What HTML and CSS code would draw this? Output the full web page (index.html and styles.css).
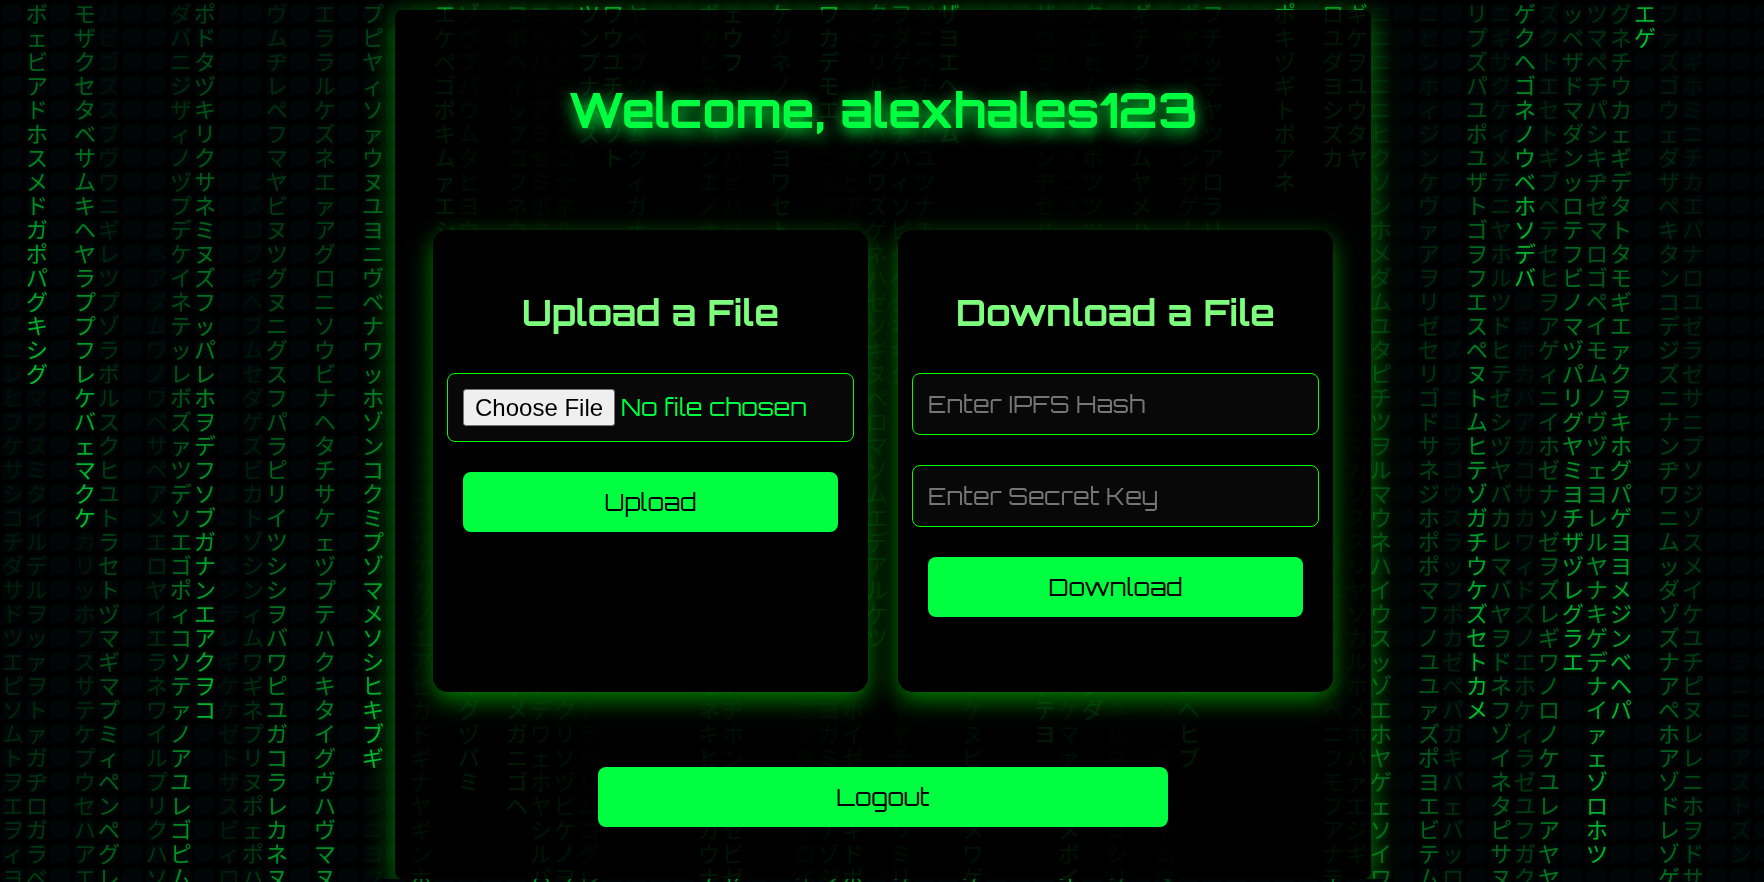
FILE: index.html
```html
<!DOCTYPE html>
<html lang="en">
<head>
<meta charset="utf-8">
<meta name="viewport" content="width=device-width, initial-scale=1">
<title>Dashboard</title>
<link rel="stylesheet" href="styles.css">
</head>
<body>
<svg class="tiles" aria-hidden="true">
  <defs>
    <pattern id="tile" width="24" height="24" patternUnits="userSpaceOnUse">
      <path d="M5 5l4-1 2 1 5-1 3-1 4 1-1 3 1 4-2 3 1 4-3 3-4 1-3 1-4-1-3 1-3-2 1-4-1-3 1-4z" fill="#000607"/>
    </pattern>
  </defs>
  <rect width="100%" height="100%" fill="url(#tile)"/>
</svg>
<div class="rain" id="rain" lang="ja" aria-hidden="true"></div>

<div class="page">
  <main class="panel">
    <h1 class="panel-title">Welcome, alexhales123</h1>
    <div class="cards">
      <form class="card">
        <h2 class="card-title">Upload a File</h2>
        <input class="field field-file" type="file" aria-label="File to upload">
        <button class="button" type="button">Upload</button>
      </form>
      <form class="card">
        <h2 class="card-title">Download a File</h2>
        <input class="field" type="text" placeholder="Enter IPFS Hash" aria-label="IPFS hash">
        <input class="field" type="text" placeholder="Enter Secret Key" aria-label="Secret key">
        <button class="button" type="button">Download</button>
      </form>
    </div>
    <button class="button logout" type="button">Logout</button>
  </main>
</div>
<script src="rain.js"></script>
</body>
</html>
```
FILE: styles.css
```css
:root {
  --green: #00ff41;
  --techno: Orbitron, "DejaVu Sans", Verdana, sans-serif;
}

* {
  box-sizing: border-box;
}

body {
  margin: 0;
  background: #000;
  color: var(--green);
  font-family: var(--techno);
  overflow: hidden;
}

.tiles {
  position: fixed;
  inset: 0;
  width: 100%;
  height: 100%;
}

.rain {
  position: fixed;
  inset: 0;
  overflow: hidden;
  display: grid;
  grid-auto-columns: 24px;
  grid-auto-rows: 24px;
  padding-left: 1px;
  font: 22px/24px "Noto Sans CJK JP", sans-serif;
  filter: drop-shadow(0 0 2px rgba(0, 255, 65, 0.2));
}

.stream {
  margin: 0;
  text-align: center;
  line-break: anywhere;
  color: transparent;
  background-image: linear-gradient(rgba(0, 215, 54, calc(var(--from) * 0.8)), rgba(0, 215, 54, calc(var(--to) * 0.9)));
  -webkit-background-clip: text;
  background-clip: text;
}

.page {
  position: relative;
  padding: 10px 16px 0 18px;
}

.panel {
  max-width: 976px;
  margin: 0 auto;
  padding: 70px 38px 52px;
  background: rgba(0, 0, 0, 0.85);
  border-radius: 8px;
  box-shadow: 0 6px 28px rgba(0, 255, 0, 0.5);
  text-align: center;
}

.panel-title {
  margin: 0 0 90px;
  font-size: 48px;
  line-height: 60px;
  text-shadow: 0 4px 16px var(--green);
}

.cards {
  display: grid;
  grid-template-columns: repeat(auto-fit, minmax(340px, 1fr));
  gap: 30px;
}

.card {
  display: flex;
  flex-direction: column;
  gap: 30px;
  padding: 60px 14px 75px;
  background: rgba(0, 0, 0, 0.9);
  border-radius: 15px;
  box-shadow: 0 8px 24px rgba(0, 255, 0, 0.5);
}

.card-title {
  margin: 0 0 8px;
  color: #7dff7d;
  font-size: 36px;
  line-height: 45px;
}

.field {
  width: 100%;
  padding: 14px 15px;
  border: 1px solid #00ff00;
  border-radius: 8px;
  background: #080808;
  color: var(--green);
  font: 24px/32px var(--techno);
  outline: none;
}

.field::placeholder {
  color: #757575;
}

.field-file {
  height: 69px;
  padding: 15px;
}

.field-file::file-selector-button {
  height: 37px;
  margin-right: 6px;
  padding: 0 11px;
  border: 1px solid #767676;
  border-radius: 3px;
  background: #efefef;
  color: #000;
  font: 24px/32px "Liberation Sans", Arial, sans-serif;
}

.button {
  height: 60px;
  margin: 0 16px;
  border: 0;
  border-radius: 8px;
  background: var(--green);
  color: #000;
  font: 24px/30px var(--techno);
  cursor: pointer;
}

.logout {
  width: calc(100% - 330px);
  margin: 75px 0 0;
}
```
FILE: rain.js
```js
// Each stream: column, first row, glyphs, brightness at the top, brightness at the bottom.
const streams = [
  [0, 12, "サズニレヒフケサシコチダサドツエピソムトヲエヲィヨ", 0.03, 0.22],
  [1, 0, "ボェビアドホスメドガポパグキシグ", 0.45, 1],
  [1, 16, "マワスミタイルデルヲッァヲトァガヂロガラベ", 0.05, 0.28],
  [3, 0, "モザクセタベサムキヘヤラププフレケバェマクケ", 0.4, 1],
  [3, 22, "カリッホプスサテケプウセハアエ", 0.07, 0.26],
  [4, 0, "バビゴズスブヴワニギレツプゾラボルスクヒユトラセトヅマギマプミィペンペグレ", 0.03, 0.5],
  [6, 8, "スニヘアダムワノワベサペアメエロヤイエラネワイルプリクハソ", 0.02, 0.26],
  [7, 0, "ダバニジザィノヅプデケイネテッレボズァツデソエゴポィコソテァノアユレゴピム", 0.14, 0.75],
  [8, 0, "ポドタヅキリクサネミヌズフッパレホヲデフソブガナンエアクヲコ", 0.33, 0.95],
  [9, 18, "イニスニシメンテレギケケゼトザスビィロ", 0.01, 0.12],
  [10, 7, "ズズロブギヘブムセダゲズビカトゾシンィムワギネプリヌポェポハ", 0.03, 0.26],
  [11, 0, "ヴムヂレペフマヤビヌツグヌニグスフパラピリイツシシヲバワピユガコラレカネヌ", 0.14, 0.75],
  [13, 0, "エララルケズネエァアグロニソウビナヘタチサケェヅプテハクキタイグヴハヴマヌ", 0.15, 0.75],
  [15, 0, "プピヤィソァウヌユヨニヴベナワッホゾンコクミプゾマメソシヒキブギ", 0.3, 0.95],
  [15, 32, "ニヌニヨク", 0.03, 0.06],
  [17, 16, "ワゴムセロウサケカソエアヒカドギナヤギンホ", 0.1, 0.6],
  [18, 0, "エケペゴポキムァエシ", 0.7, 1],
  [19, 0, "ゾヴブバウムタヒヨウ", 0.25, 0.5],
  [19, 27, "ノマグヅバミ", 0.7, 1],
  [21, 0, "コボヘィッブコフネウケヒナクツ", 0.3, 0.55],
  [21, 24, "セサコニケメガニゴヘ", 0.6, 1],
  [22, 0, "ニヘバトアミセミボネ", 0.15, 0.35],
  [22, 23, "ルアスゲツシデワェホヤシルバ", 0.4, 0.75],
  [23, 0, "コシベニスナコナネル", 0.1, 0.3],
  [23, 23, "ニソヅリヤソクリソヅピケノヲ", 0.3, 0.7],
  [24, 0, "ツンプナホス", 0.85, 1],
  [24, 28, "ルトテペリムコグレ", 0.15, 0.35],
  [25, 0, "ワウユチイソト", 0.85, 1],
  [26, 0, "ヤペブツカムクィガナブイソコ", 0.35, 0.6],
  [29, 0, "ボカレネキカンエノナ", 0.25, 0.4],
  [29, 26, "ソノオネキヒガンガウナ", 0.3, 0.8],
  [30, 0, "ェウフ", 0.85, 1],
  [30, 3, "トヒスハヒハソ", 0.15, 0.25],
  [30, 26, "ヤギドヂホンミナセビゼ", 0.3, 0.75],
  [32, 0, "ケジネノヘフヨワセトミモシサ", 0.5, 0.85],
  [33, 29, "エラタジロナロイ", 0.15, 0.3],
  [34, 0, "ワカデモエ", 0.9, 1],
  [34, 5, "ムニエギス", 0.1, 0.2],
  [34, 27, "ドムヨガミヌドナゾジ", 0.3, 0.6],
  [35, 0, "ハメバソルテゼピアス", 0.1, 0.25],
  [35, 27, "ラネホイゼエサキドポ", 0.3, 0.7],
  [36, 0, "クァリルソパクワズゲネハゼソギヌペロマソムエデアルケツ", 0.35, 0.9],
  [37, 0, "ヲダゲキミヂハィソピヘベダネギク", 0.4, 0.7],
  [37, 29, "ヤヤテスルリミリ", 0.2, 0.5],
  [38, 0, "ペニペチロエユツナエ", 0.25, 0.5],
  [39, 0, "ザヨエヘヘム", 0.8, 1],
  [40, 28, "ゲケヌビモハメワゲ", 0.35, 0.7],
  [43, 0, "ザウヨェネワンヂセパ", 0.2, 0.4],
  [43, 26, "ヌサチテヨ", 0.8, 1],
  [44, 1, "ニサニソマミニゼ", 0.06, 0.15],
  [44, 26, "ソロケケマァヤピメポイ", 0.3, 0.8],
  [45, 0, "クエヒムラテポツツツ", 0.25, 0.45],
  [45, 27, "ンンダ", 0.9, 1],
  [46, 29, "ネルネナミミシリ", 0.15, 0.35],
  [47, 0, "ギチフミナクムヤメハ", 0.4, 0.65],
  [48, 29, "メニテナカヤムタ", 0.08, 0.2],
  [49, 0, "ボヤヴドモワシザゲム", 0.25, 0.4],
  [49, 27, "フニヘヒブ", 0.85, 1],
  [50, 0, "フチッデヤツアロラリ", 0.45, 0.65],
  [53, 0, "ポキヅギトポアネ", 0.8, 1],
  [55, 0, "ロユダヨシズカ", 0.8, 1],
  [55, 7, "セゾロ", 0.04, 0.08],
  [55, 22, "ククニヌサヒマペニフモプアナテ", 0.15, 0.6],
  [56, 0, "ギケヲユウタヤ", 0.85, 1],
  [56, 15, "カヒホマカソススリヤソカルホメホバァエジギ", 0.15, 0.6],
  [57, 0, "ニニニニニヒクソンホメダムユタピチツヲルマウネハイウスッゾエホヤゲェソイワ", 0.05, 0.5],
  [59, 0, "ニヒンホィジンケヴァアヲリゼセリゴドサネジホポポマフノユユァズポヨエビテム", 0.04, 0.5],
  [60, 13, "ニズリニユラコウスラッフポカゼペパガキバェバッロ", 0.03, 0.22],
  [61, 0, "リプズパユポユザトゴヲフエスペヌトムヒテゾガチウケズセトカメ", 0.27, 1],
  [62, 0, "ニギサクケィメテニヤホルツドヒテゼシヅヤバカレマバヤヲドネフゾイネタピサヌ", 0.06, 0.5],
  [63, 0, "ゲクヘゴネノウベホソデバ", 0.6, 1],
  [63, 12, "ズギホカバアカコサカワィドズノエホケィラゼユフガク", 0.03, 0.3],
  [64, 0, "ズクトエセトギブペテセヒヲアゲィニイホゼナソゼヲズレギワノロノケユレアヤヤ", 0.1, 0.6],
  [65, 0, "ッベザドマダンッロテフビノマヅパリグヤミヨチザヅレグラエ", 0.27, 0.95],
  [66, 0, "ツマペチパシキヂゼマロゴペイモムノヴヅェヨレルヤナキゲデナイァェゾロホツ", 0.2, 0.95],
  [67, 0, "グネチウカェギデタトタモギエァクヲキホグパゲヨヨメジンベヘパ", 0.25, 0.95],
  [68, 0, "エゲ", 0.95, 1],
  [69, 0, "ブァズゴウェダザペキタンコデジズニナンヂワニムッダゾズナアペホアゾドレゾゲ", 0.08, 0.55],
  [70, 0, "ハバギホミニチカエパナロユゼラゼサニプソジゾスメイケユチピヌレレニホヲドサ", 0.03, 0.36],
  [72, 27, "ミニニヌアストズン", 0.03, 0.1]
];

const rain = document.getElementById("rain");
for (const [column, row, glyphs, from, to] of streams) {
  const stream = document.createElement("p");
  stream.className = "stream";
  stream.textContent = glyphs;
  stream.style.gridArea = `${row + 1} / ${column + 1} / span ${glyphs.length} / span 1`;
  stream.style.setProperty("--from", from);
  stream.style.setProperty("--to", to);
  rain.append(stream);
}
```
